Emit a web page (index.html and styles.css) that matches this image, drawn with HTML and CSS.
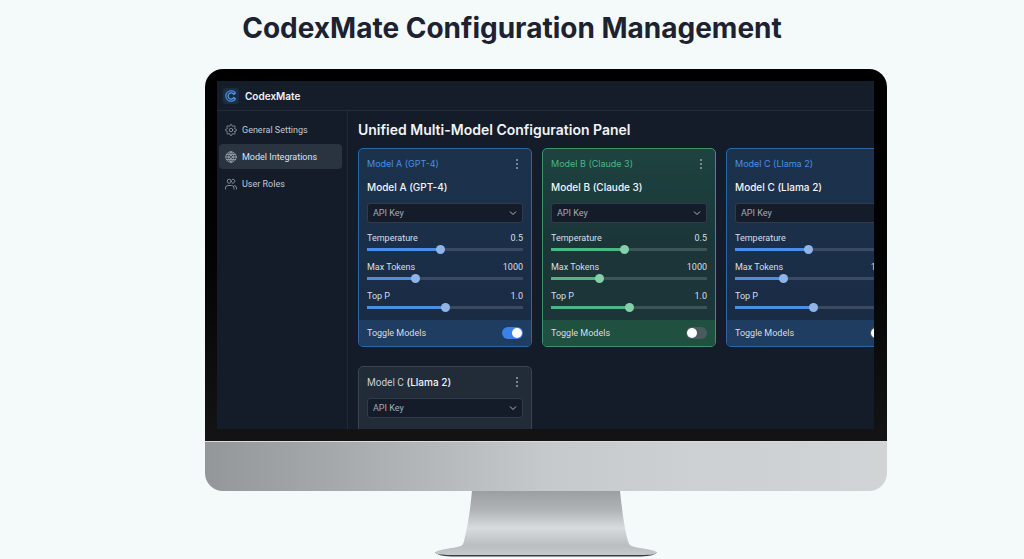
FILE: index.html
```html
<!DOCTYPE html>
<html lang="en">

<head>
    <meta charset="UTF-8">
    <meta name="viewport" content="width=device-width, initial-scale=1.0">
    <title>CodexMate Configuration Management</title>
    <link rel="stylesheet" href="styles.css">
</head>

<body>
    <h1 class="page-title">CodexMate Configuration Management</h1>

    <div class="monitor">
        <div class="bezel">
            <div class="screen">
                <header class="topbar">
                    <div class="logo">
                        <svg viewBox="0 0 16 16" width="16" height="16" fill="none">
                            <path d="M12.500 5A5.300 5.300 0 1 0 12.500 11" stroke="#3f7fca" stroke-width="1.500" />
                            <path d="M12.500 5L10.800 6.300A3.100 3.100 0 1 0 10.800 9.700L12.500 11" stroke="#5aa2ee" stroke-width="1.200" />
                        </svg>
                    </div>
                    <span class="brand">CodexMate</span>
                </header>

                <div class="workspace">
                    <nav class="sidebar">
                        <a class="nav-item" href="#">
                            <svg class="nav-icon" viewBox="0 0 24 24">
                                <circle cx="12" cy="12" r="3.500" />
                                <path d="M19.400 15a1.650 1.650 0 0 0 .33 1.820l.06.06a2 2 0 1 1-2.830 2.830l-.06-.06a1.650 1.650 0 0 0-2.800 1.170V21a2 2 0 0 1-4 0v-.09a1.650 1.650 0 0 0-2.900-1.260l-.06.06a2 2 0 1 1-2.830-2.830l.06-.06A1.650 1.650 0 0 0 3.100 14H3a2 2 0 0 1 0-4h.09a1.650 1.650 0 0 0 1.260-2.900l-.06-.06a2 2 0 1 1 2.830-2.830l.06.06A1.650 1.650 0 0 0 10 3.100V3a2 2 0 0 1 4 0v.09a1.650 1.650 0 0 0 2.820 1.180l.06-.06a2 2 0 1 1 2.830 2.830l-.06.06A1.650 1.650 0 0 0 20.900 10H21a2 2 0 0 1 0 4h-.09a1.650 1.650 0 0 0-1.510 1z" />
                            </svg>
                            General Settings
                        </a>
                        <a class="nav-item active" href="#">
                            <svg class="nav-icon" viewBox="0 0 24 24">
                                <circle cx="12" cy="12" r="10.500" />
                                <circle cx="12" cy="12" r="3" />
                                <path d="M12 1.500c-4 3-5.500 6-5.500 10.500s1.500 7.500 5.500 10.500M12 1.500c4 3 5.500 6 5.500 10.500s-1.500 7.500-5.500 10.500M3 7h18M3 17h18M1.500 12H9M15 12h7.500M12 1.500V9M12 15v7.500" />
                            </svg>
                            Model Integrations
                        </a>
                        <a class="nav-item" href="#">
                            <svg class="nav-icon" viewBox="0 0 24 24">
                                <circle cx="8.500" cy="6.500" r="4" />
                                <path d="M14.500 2.700a4 4 0 1 1 0 7.600M1 22v-2a5 5 0 0 1 5-5h7a5 5 0 0 1 5 5v2M19 15a5 5 0 0 1 4 5v2" />
                            </svg>
                            User Roles
                        </a>
                    </nav>

                    <main class="content">
                        <h2 class="panel-title">Unified Multi-Model Configuration Panel</h2>

                        <div class="cards">
                            <section class="card blue">
                                <div class="card-body">
                                    <div class="card-top">
                                        <span class="card-tag">Model A (GPT-4)</span>
                                        <button class="menu-btn" aria-label="Model A menu"><i></i><i></i><i></i></button>
                                    </div>
                                    <h3 class="card-title">Model A (GPT-4)</h3>
                                    <div class="select-box">
                                        <select aria-label="Model A API key">
                                            <option>API Key</option>
                                        </select>
                                        <svg class="chevron" viewBox="0 0 8 8"><path d="M1 2.500l3 3 3-3" /></svg>
                                    </div>
                                    <div class="setting">
                                        <label for="a-temp">Temperature</label>
                                        <output for="a-temp">0.5</output>
                                        <input type="range" id="a-temp" value="47" style="--fill: 47%">
                                    </div>
                                    <div class="setting">
                                        <label for="a-tokens">Max Tokens</label>
                                        <output for="a-tokens">1000</output>
                                        <input type="range" id="a-tokens" value="30" style="--fill: 30%">
                                    </div>
                                    <div class="setting">
                                        <label for="a-top">Top P</label>
                                        <output for="a-top">1.0</output>
                                        <input type="range" id="a-top" value="50" style="--fill: 50%">
                                    </div>
                                </div>
                                <div class="card-footer">
                                    <label for="a-toggle">Toggle Models</label>
                                    <input type="checkbox" class="toggle" id="a-toggle" checked>
                                </div>
                            </section>

                            <section class="card green">
                                <div class="card-body">
                                    <div class="card-top">
                                        <span class="card-tag">Model B (Claude 3)</span>
                                        <button class="menu-btn" aria-label="Model B menu"><i></i><i></i><i></i></button>
                                    </div>
                                    <h3 class="card-title">Model B (Claude 3)</h3>
                                    <div class="select-box">
                                        <select aria-label="Model B API key">
                                            <option>API Key</option>
                                        </select>
                                        <svg class="chevron" viewBox="0 0 8 8"><path d="M1 2.500l3 3 3-3" /></svg>
                                    </div>
                                    <div class="setting">
                                        <label for="b-temp">Temperature</label>
                                        <output for="b-temp">0.5</output>
                                        <input type="range" id="b-temp" value="47" style="--fill: 47%">
                                    </div>
                                    <div class="setting">
                                        <label for="b-tokens">Max Tokens</label>
                                        <output for="b-tokens">1000</output>
                                        <input type="range" id="b-tokens" value="30" style="--fill: 30%">
                                    </div>
                                    <div class="setting">
                                        <label for="b-top">Top P</label>
                                        <output for="b-top">1.0</output>
                                        <input type="range" id="b-top" value="50" style="--fill: 50%">
                                    </div>
                                </div>
                                <div class="card-footer">
                                    <label for="b-toggle">Toggle Models</label>
                                    <input type="checkbox" class="toggle" id="b-toggle">
                                </div>
                            </section>

                            <section class="card blue">
                                <div class="card-body">
                                    <div class="card-top">
                                        <span class="card-tag">Model C (Llama 2)</span>
                                    </div>
                                    <h3 class="card-title">Model C (Llama 2)</h3>
                                    <div class="select-box">
                                        <select aria-label="Model C API key">
                                            <option>API Key</option>
                                        </select>
                                    </div>
                                    <div class="setting">
                                        <label for="c-temp">Temperature</label>
                                        <output for="c-temp"></output>
                                        <input type="range" id="c-temp" value="47" style="--fill: 47%">
                                    </div>
                                    <div class="setting">
                                        <label for="c-tokens">Max Tokens</label>
                                        <output for="c-tokens">1000</output>
                                        <input type="range" id="c-tokens" value="30" style="--fill: 30%">
                                    </div>
                                    <div class="setting">
                                        <label for="c-top">Top P</label>
                                        <output for="c-top"></output>
                                        <input type="range" id="c-top" value="50" style="--fill: 50%">
                                    </div>
                                </div>
                                <div class="card-footer">
                                    <label for="c-toggle">Toggle Models</label>
                                    <input type="checkbox" class="toggle" id="c-toggle">
                                </div>
                            </section>

                            <section class="card gray">
                                <div class="card-body">
                                    <div class="card-top">
                                        <h3 class="card-title"><span class="light">Model C</span> (Llama 2)</h3>
                                        <button class="menu-btn" aria-label="Model C menu"><i></i><i></i><i></i></button>
                                    </div>
                                    <div class="select-box">
                                        <select aria-label="Llama 2 API key">
                                            <option>API Key</option>
                                        </select>
                                        <svg class="chevron" viewBox="0 0 8 8"><path d="M1 2.500l3 3 3-3" /></svg>
                                    </div>
                                </div>
                            </section>
                        </div>
                    </main>
                </div>
            </div>
        </div>
        <div class="chin"></div>
        <svg class="stand" viewBox="0 0 222 66" width="222" height="66">
            <defs>
                <linearGradient id="neck" x1="0" y1="0" x2="0" y2="1">
                    <stop offset="0" stop-color="#9b9fa2" />
                    <stop offset="0.300" stop-color="#b0b4b6" />
                    <stop offset="0.580" stop-color="#d9dcdd" />
                    <stop offset="0.850" stop-color="#bbbec0" />
                    <stop offset="1" stop-color="#c6c9ca" />
                </linearGradient>
            </defs>
            <path d="M0 61Q2 65 16 65.500H206Q220 65 222 61Z" fill="#3b3e42" />
            <path d="M37 0H185C187 20 190 40 193 50C194 54 196 55 200 56C210 58 220 59 222 61.500C220 64 212 64 204 64H18C10 64 2 64 0 61.500C2 59 12 58 22 56C27 55 28 54 29 50C33 34 35 20 37 0Z" fill="url(#neck)" />
        </svg>
    </div>
</body>

</html>
```

FILE: styles.css
```css
* {
    margin: 0;
    padding: 0;
    box-sizing: border-box;
}

body {
    background: #f4f9fa;
    font-family: 'Inter', sans-serif;
    min-height: 100vh;
    overflow: hidden;
}

.page-title {
    padding-top: 11px;
    font-size: 28px;
    line-height: 34px;
    font-weight: 700;
    color: #1d2230;
    text-align: center;
}

.monitor {
    margin: 24px 137px 0 205px;
    display: flex;
    flex-direction: column;
}

.bezel {
    padding: 12px 13px 12px 12px;
    background: linear-gradient(#000, #030303 50%, #141414);
    border-radius: 18px 18px 0 0;
}

.chin {
    height: 50px;
    background: linear-gradient(90deg, #93979a, #a6aaad 20%, #c6c9cc 50%, #cdd0d3 70%, #d1d4d5);
    border-top: 1px solid #d8dbdd;
    border-radius: 0 0 18px 18px;
}

.stand {
    align-self: center;
}

.screen {
    aspect-ratio: 17 / 9;
    overflow: hidden;
    background: #141c29;
    color: #d9dee6;
    font-family: 'Roboto', sans-serif;
    font-size: 9px;
    line-height: 12px;
}

.topbar {
    height: 30px;
    padding: 0 6px;
    display: flex;
    align-items: center;
    gap: 6px;
    background: #151d2b;
    border-bottom: 1px solid #232e3c;
}

.logo {
    width: 16px;
    height: 16px;
    background: #1b2c45;
    border-radius: 3px;
}

.logo svg {
    display: block;
}

.brand {
    font-family: 'Inter', sans-serif;
    font-size: 10px;
    font-weight: 600;
    color: #f0f3f7;
}

.workspace {
    display: flex;
}

.sidebar {
    flex: none;
    width: 131px;
    height: 340px;
    padding: 6px 5px 0 2px;
    display: flex;
    flex-direction: column;
    gap: 2px;
    border-right: 1px solid #1f2937;
}

.nav-item {
    height: 25px;
    padding: 0 6px;
    display: flex;
    align-items: center;
    gap: 5px;
    color: #c3c9d2;
    text-decoration: none;
    border-radius: 4px;
}

.nav-item.active {
    background: #2a3441;
    color: #dde2e9;
}

.nav-icon {
    width: 12px;
    height: 12px;
    fill: none;
    stroke: #9ba4b0;
    stroke-width: 1.600;
    stroke-linecap: round;
    stroke-linejoin: round;
}

.content {
    padding: 10px 0 0 10px;
}

.panel-title {
    font-family: 'Inter', sans-serif;
    font-size: 14px;
    line-height: 18px;
    font-weight: 600;
    color: #f0f3f7;
    white-space: nowrap;
}

.cards {
    margin-top: 9px;
    display: grid;
    grid-template-columns: repeat(3, 174px);
    gap: 19px 10px;
}

.card {
    --accent: #4a8fe7;
    --thumb: #8fb4e8;
    --rail: #3b4a63;
    border: 1px solid #2f669f;
    border-radius: 5px;
    overflow: hidden;
}

.card-body {
    padding: 8px;
}

.card.blue {
    background: linear-gradient(#1c324c, #1a2b43);
}

.card.green {
    --accent: #4cb782;
    --thumb: #84d0a8;
    --rail: #3c5557;
    border-color: #419268;
    background: linear-gradient(#1d4340, #1b3539 50%);
}

.card.gray {
    border-color: #3a4452;
    background: #222b38;
}

.gray .card-body {
    padding-bottom: 24px;
}

.card-top {
    display: flex;
    justify-content: space-between;
    align-items: center;
    height: 14px;
}

.card-tag {
    font-family: 'Inter', sans-serif;
    color: var(--accent);
}

.menu-btn {
    width: 12px;
    height: 12px;
    border: none;
    background: none;
    display: flex;
    flex-direction: column;
    justify-content: center;
    align-items: center;
    gap: 2px;
    cursor: pointer;
}

.menu-btn i {
    width: 2px;
    height: 2px;
    background: #94a0b0;
    border-radius: 50%;
}

.card-title {
    font-family: 'Inter', sans-serif;
    font-size: 10px;
    line-height: 14px;
    font-weight: 500;
    color: #f4f6f9;
}

.card-top + .card-title {
    margin-top: 9px;
}

.light {
    font-family: 'Roboto', sans-serif;
    font-weight: 400;
    color: #c9ced6;
}

.select-box {
    display: grid;
    align-items: center;
    margin-top: 9px;
}

.select-box select,
.chevron {
    grid-area: 1 / 1;
}

.select-box select {
    appearance: none;
    width: 100%;
    height: 20px;
    padding: 0 5px;
    font: inherit;
    color: #a3abb7;
    background: #141c2a;
    border: 1px solid #303c4d;
    border-radius: 3px;
}

.chevron {
    justify-self: end;
    width: 8px;
    height: 8px;
    margin-right: 6px;
    fill: none;
    stroke: #aeb8c6;
    pointer-events: none;
}

.setting {
    display: grid;
    grid-template-columns: 1fr auto;
    margin-top: 9px;
}

.setting + .setting {
    margin-top: 7px;
}

.setting input {
    grid-column: 1 / 3;
    appearance: none;
    width: 100%;
    height: 10px;
    background: linear-gradient(90deg, var(--accent) var(--fill), var(--rail) var(--fill)) center / 100% 3px no-repeat;
    cursor: pointer;
}

.setting input::-webkit-slider-thumb {
    appearance: none;
    width: 9px;
    height: 9px;
    background: var(--thumb);
    border-radius: 50%;
}

.card-footer {
    height: 26px;
    padding: 0 8px;
    display: flex;
    justify-content: space-between;
    align-items: center;
    background: #1f3d60;
}

.green .card-footer {
    background: #20503f;
}

.toggle {
    appearance: none;
    width: 21px;
    height: 12px;
    padding: 1px;
    display: flex;
    background: #4a5b5f;
    border-radius: 6px;
    cursor: pointer;
}

.toggle::before {
    content: "";
    width: 10px;
    height: 10px;
    background: #fff;
    border-radius: 50%;
}

.toggle:checked {
    justify-content: flex-end;
    background: #3a82ea;
}
```
